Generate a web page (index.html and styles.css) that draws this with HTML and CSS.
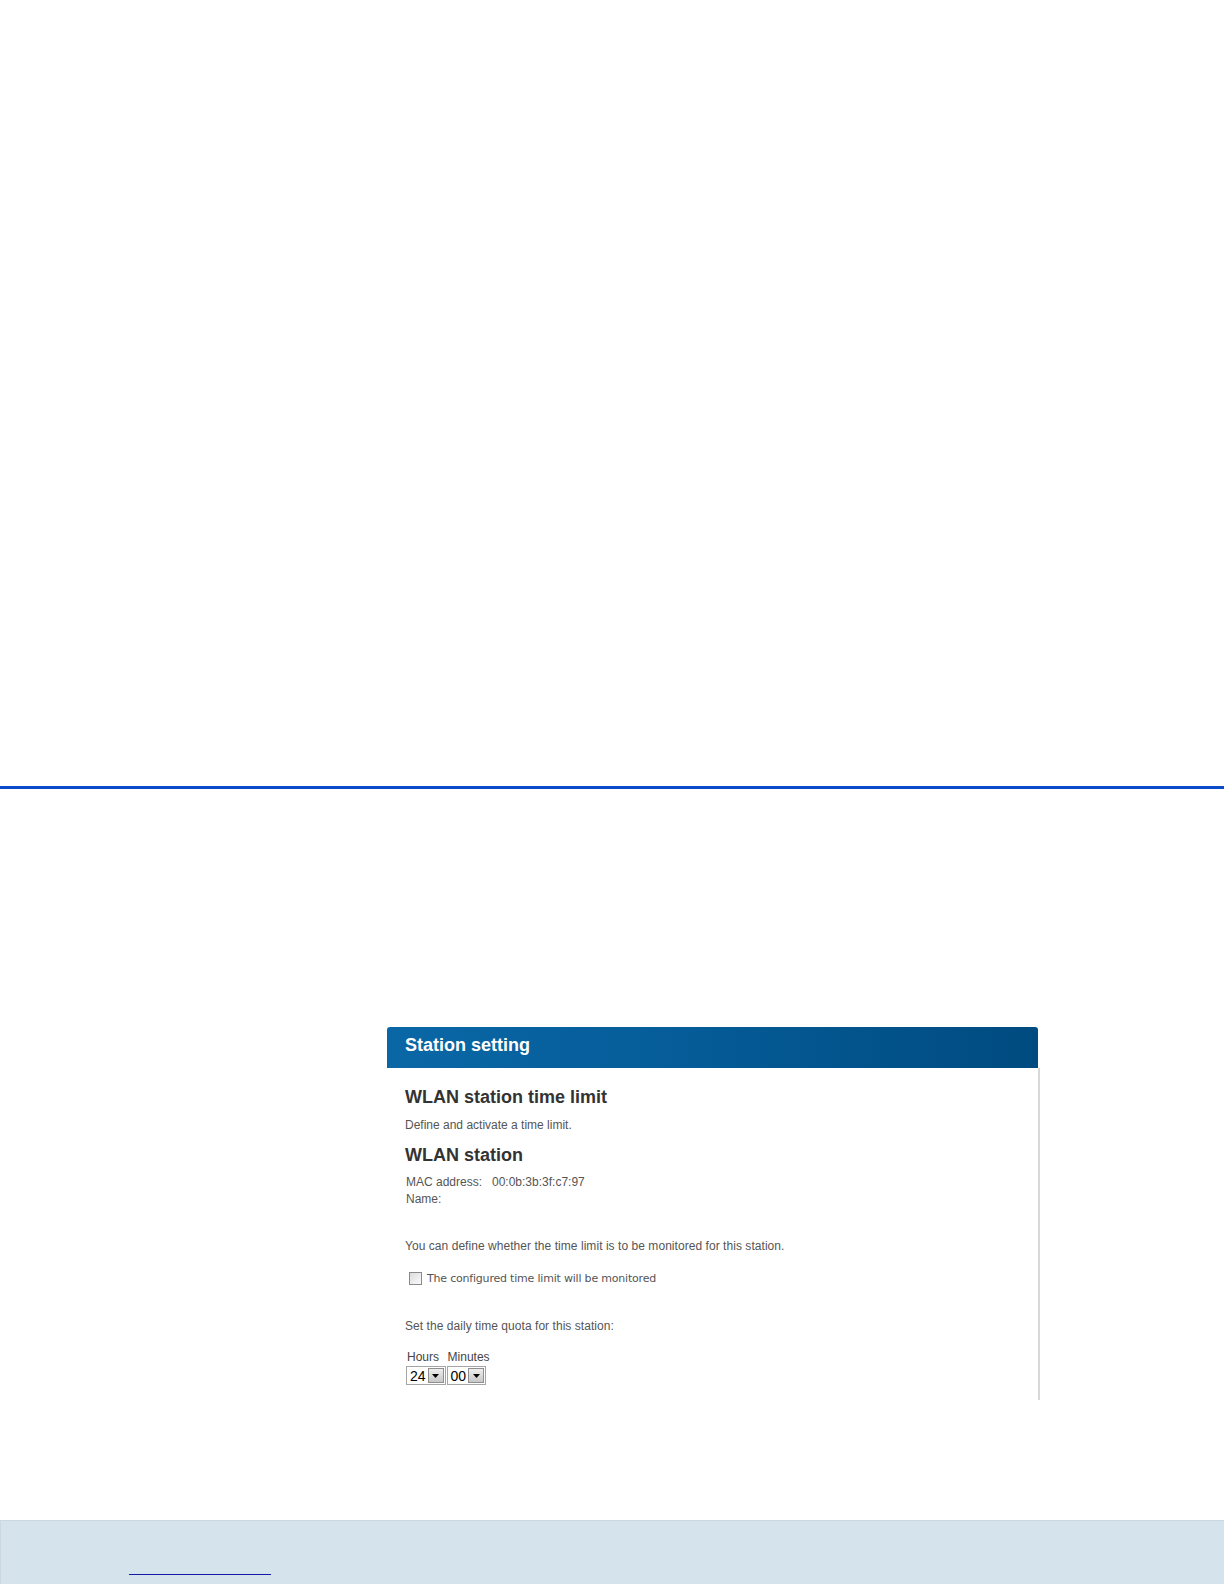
FILE: index.html
```html
<!DOCTYPE html>
<html>
<head>
<meta charset="utf-8">
<link rel="stylesheet" href="styles.css">
</head>
<body>
<div class="top-space"></div>
<div class="rule"></div>
<div class="gap"></div>
<div class="panel">
  <div class="panel-head">Station setting</div>
  <div class="panel-body">
    <h2 class="title">WLAN station time limit</h2>
    <p class="intro">Define and activate a time limit.</p>
    <h2 class="subtitle">WLAN station</h2>
    <div class="info">
      <div class="info-row"><span class="info-label">MAC address:</span><span>00:0b:3b:3f:c7:97</span></div>
      <div class="info-row"><span class="info-label">Name:</span><span></span></div>
    </div>
    <p class="text monitor-text">You can define whether the time limit is to be monitored for this station.</p>
    <label class="check"><span class="box"></span><span class="check-label">The configured time limit will be monitored</span></label>
    <p class="text quota-text">Set the daily time quota for this station:</p>
    <div class="selects">
      <div class="sel-col">
        <span class="sel-label">Hours</span>
        <span class="sel"><span class="sel-val">24</span><span class="sel-btn"><svg width="7" height="4" viewBox="0 0 7 4"><path d="M0 0h7L3.5 4z" fill="#000"/></svg></span></span>
      </div>
      <div class="sel-col">
        <span class="sel-label">Minutes</span>
        <span class="sel"><span class="sel-val">00</span><span class="sel-btn"><svg width="7" height="4" viewBox="0 0 7 4"><path d="M0 0h7L3.5 4z" fill="#000"/></svg></span></span>
      </div>
    </div>
  </div>
</div>
<div class="footer">
  <a class="foot-link" href="#"></a>
</div>
</body>
</html>
```

FILE: styles.css
```css
html, body {
  margin: 0;
  padding: 0;
  background: #fff;
  font-family: "Liberation Sans", Arial, sans-serif;
}
.top-space { height: 786px; }
.rule { height: 3px; background: #0b4bc9; }
.gap { height: 238px; }
.panel {
  margin-left: 387px;
  width: 653px;
}
.panel-head {
  height: 41px;
  box-sizing: border-box;
  padding: 8px 0 0 18px;
  margin-right: 2px;
  color: #fff;
  font-weight: bold;
  font-size: 18px;
  border-radius: 3px 3px 0 0;
  background: linear-gradient(90deg, #0a67a6 0%, #055c98 45%, #004b80 100%);
}
.panel-body {
  border-right: 2px solid #d8d8d8;
  height: 332px;
  box-sizing: border-box;
  padding: 19px 0 0 18px;
  color: #555;
  font-size: 12px;
}
.title, .subtitle {
  margin: 0;
  font-size: 18px;
  font-weight: bold;
  color: #333;
  line-height: 21px;
}
.intro { margin: 10px 0 0; line-height: 14px; }
.subtitle { margin-top: 13px; }
.info { margin-top: 8px; padding-left: 1px; line-height: 17px; }
.info-label { display: inline-block; width: 86px; }
.text { margin: 0; line-height: 14px; letter-spacing: 0.05px; }
.monitor-text { margin-top: 31px; }
.check {
  display: flex;
  align-items: center;
  margin-top: 19px;
  margin-left: 4px;
  gap: 5px;
}
.box {
  width: 11px;
  height: 11px;
  border: 1px solid #8a8a8a;
  background: linear-gradient(135deg, #dcdcdc, #fafafa);
  box-sizing: content-box;
}
.check-label {
  font-family: "DejaVu Sans", Verdana, sans-serif;
  font-size: 11px;
  color: #555;
  letter-spacing: -0.2px;
}
.quota-text { margin-top: 34px; }
.selects {
  display: flex;
  gap: 1px;
  margin-top: 17px;
  padding-left: 1px;
}
.sel-col { display: flex; flex-direction: column; align-items: flex-start; }
.sel-label { color: #444; line-height: 14px; padding-left: 1px; }
.sel {
  display: flex;
  align-items: center;
  height: 19px;
  box-sizing: border-box;
  border: 1px solid #a5a5a5;
  background: #fff;
  padding: 1px;
  margin-top: 2px;
}
.sel-val { color: #000; font-size: 14px; padding: 0 2px 0 2px; }
.sel-btn {
  width: 16px;
  height: 15px;
  box-sizing: border-box;
  border: 1px solid #8f8f8f;
  background: linear-gradient(#eeeeee, #c8c8c8);
  display: flex;
  align-items: center;
  justify-content: center;
}
.footer {
  margin-top: 120px;
  height: 64px;
  background: #d5e3ec;
  border-top: 1px solid #ccd7df;
  border-left: 1px solid #ccd7df;
  box-sizing: border-box;
  padding: 53px 0 0 128px;
}
.foot-link {
  display: block;
  width: 142px;
  height: 0;
  border-bottom: 1px solid #1a1aa8;
}
```
